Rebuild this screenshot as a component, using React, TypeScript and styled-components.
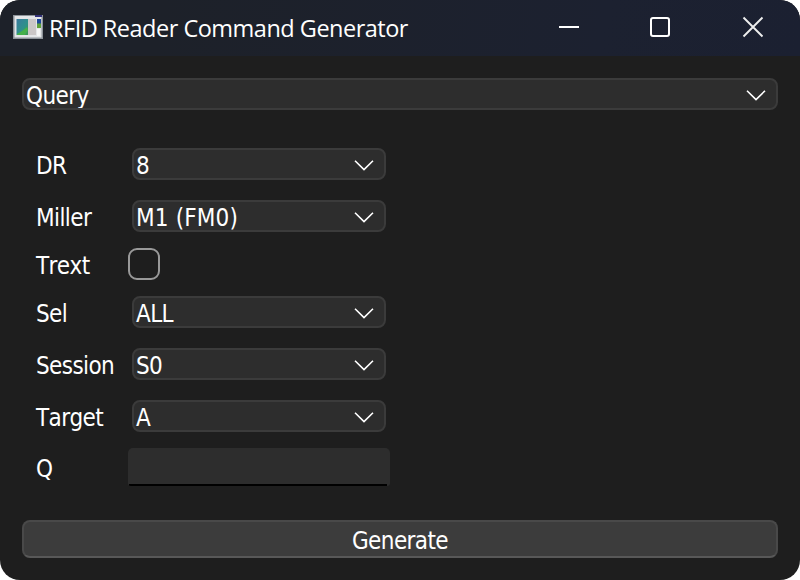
import React from "react";
import styled, { createGlobalStyle } from "styled-components";

const GlobalStyle = createGlobalStyle`
  * { box-sizing: border-box; }
  body { margin: 0; background: #fff; }
`;

const Window = styled.main`
  width: 800px;
  height: 580px;
  display: flex;
  flex-direction: column;
  overflow: hidden;
  border-radius: 20px;
  background: #1e1e1e;
  color: #fff;
  font: 24px/32px "DejaVu Sans Condensed", "DejaVu Sans", sans-serif;
  font-stretch: condensed;
  font-kerning: none;
`;

const TitleBar = styled.header`
  height: 56px;
  flex: none;
  display: flex;
  align-items: center;
  padding: 0 36px 2px 13px;
  background: linear-gradient(100deg, #1d2129 20%, #1c2130 75%, #1b2031);
`;

const Title = styled.h1`
  flex: 1;
  margin: 2px 0 0 6px;
  font: 400 23.5px/32px "Open Sans", "Noto Sans", sans-serif;
  letter-spacing: -0.5px;
  white-space: nowrap;
`;

const WindowButtons = styled.div`
  display: flex;
  align-items: center;
  gap: 70px;
`;

const WindowButton = styled.button`
  width: 22px;
  height: 22px;
  padding: 0;
  border: 0;
  background: none;
  color: #fff;
  svg { display: block; }
`;

const Body = styled.form`
  flex: 1;
  display: flex;
  flex-direction: column;
  padding: 22px 22px;
`;

const Select = styled.button<{ $wide?: boolean }>`
  width: ${(p) => (p.$wide ? "756px" : "254px")};
  height: 32px;
  display: flex;
  align-items: center;
  justify-content: space-between;
  flex: none;
  margin-left: ${(p) => (p.$wide ? "0" : "4px")};
  padding: 2px 10px 0 2px;
  overflow: hidden;
  border: 2px solid #3b3b3b;
  border-radius: 8px;
  background: #2d2d2d;
  color: inherit;
  font: inherit;
  font-kerning: none;
  text-align: left;
`;

const Fields = styled.div`
  display: flex;
  flex-direction: column;
  margin: 28px 0 0 14px;
`;

const Row = styled.div<{ $height: number }>`
  height: ${(p) => p.$height}px;
  display: grid;
  grid-template-columns: 92px 262px;
  align-items: center;
`;

const Text = styled.span<{ $spacing?: number }>`
  letter-spacing: ${(p) => p.$spacing ?? -0.6}px;
  padding-top: 2px;
  white-space: nowrap;
`;

const Label = styled(Text)`
  padding-top: 4px;
`;

const CheckBox = styled.input`
  appearance: none;
  width: 32px;
  height: 32px;
  margin: 0;
  border: 2px solid #999;
  border-radius: 9px;
  background: #1e1e1e;
`;

const Input = styled.input`
  width: 262px;
  height: 38px;
  padding: 0 6px;
  border: 0;
  border-radius: 5px 5px 3px 3px;
  outline: 0;
  background: linear-gradient(#000, #000) 1px 100% / 258px 2px no-repeat, #2d2d2d;
  color: inherit;
  font: inherit;
`;

const Generate = styled.button`
  height: 38px;
  flex: none;
  display: flex;
  align-items: center;
  justify-content: center;
  margin-top: 28px;
  padding: 2px 0 0;
  border: 2px solid #494949;
  border-bottom-color: #585858;
  border-radius: 8px;
  background: #3c3c3c;
  color: inherit;
  font: inherit;
  font-kerning: none;
`;

const AppIcon = () => (
  <svg width="30" height="26" viewBox="0 0 30 26">
    <defs>
      <linearGradient id="screen" x1="0" y1="0" x2="1" y2="1">
        <stop offset="0" stopColor="#3a7a9e" />
        <stop offset=".55" stopColor="#2f908c" />
        <stop offset="1" stopColor="#3f9a48" />
      </linearGradient>
    </defs>
    <path d="M0 1h30v24H0z" fill="#8d9399" />
    <path d="M1.5 2h27v21.5h-27z" fill="#e4e6e8" />
    <path d="M3.5 5h12v16h-12z" fill="url(#screen)" />
    <path d="M4 20l5-3 5-4 1 3-3 5H4z" fill="#45b04a" />
    <path d="M15 5h8v16h-8z" fill="#cbc7c7" />
    <path d="M22 1h7v2h-7z" fill="#34327a" />
    <path d="M24 5h4v5h-4z" fill="#1c489c" />
    <path d="M24 9.5h4v4.5h-4z" fill="#5fa23a" />
    <path d="M24 15h3v7h-3z" fill="#f6f6f6" />
  </svg>
);

const Chevron = () => (
  <svg width="20" height="12" viewBox="0 0 20 12" fill="none" stroke="#fff" strokeWidth="1.6">
    <path d="M1 1.8l9 8.8 9-8.8" />
  </svg>
);

const rows = [
  { label: "DR", value: "8", height: 52 },
  { label: "Miller", value: "M1 (FM0)", spacing: 0.15, height: 52 },
  { label: "Trext", kind: "check", height: 44 },
  { label: "Sel", value: "ALL", height: 52 },
  { label: "Session", value: "S0", height: 52 },
  { label: "Target", value: "A", height: 52 },
  { label: "Q", kind: "input", height: 50 },
];

export default function App() {
  return (
    <Window>
      <GlobalStyle />
      <TitleBar>
        <AppIcon />
        <Title>RFID Reader Command Generator</Title>
        <WindowButtons>
          <WindowButton aria-label="Minimize">
            <svg width="22" height="22"><path d="M1 11h20" stroke="#fff" strokeWidth="2" /></svg>
          </WindowButton>
          <WindowButton aria-label="Maximize">
            <svg width="22" height="22"><rect x="1" y="2" width="18" height="18" rx="2" fill="none" stroke="#fff" strokeWidth="2" /></svg>
          </WindowButton>
          <WindowButton aria-label="Close">
            <svg width="22" height="22"><path d="M1.5 1.5l19 19m0-19l-19 19" stroke="#eee" strokeWidth="1.9" /></svg>
          </WindowButton>
        </WindowButtons>
      </TitleBar>
      <Body>
        <Select type="button" $wide>
          <Text>Query</Text>
          <Chevron />
        </Select>
        <Fields>
          {rows.map((r) => (
            <Row key={r.label} $height={r.height}>
              <Label>{r.label}</Label>
              {r.kind === "check" ? (
                <CheckBox type="checkbox" aria-label={r.label} />
              ) : r.kind === "input" ? (
                <Input aria-label={r.label} />
              ) : (
                <Select type="button">
                  <Text $spacing={r.spacing}>{r.value}</Text>
                  <Chevron />
                </Select>
              )}
            </Row>
          ))}
        </Fields>
        <Generate type="button">
          <Text>Generate</Text>
        </Generate>
      </Body>
    </Window>
  );
}
